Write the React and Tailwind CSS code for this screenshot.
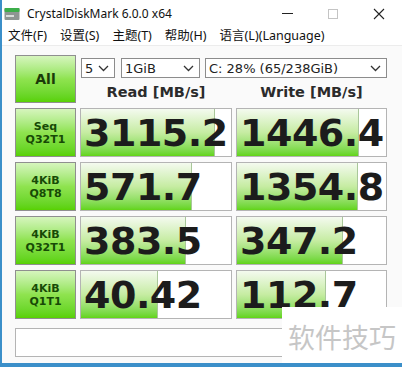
import { useState } from 'react';

const rows = [
  { top: 'Seq', bottom: 'Q32T1', read: '3115.2', readPct: 89, write: '1446.4', writePct: 82 },
  { top: '4KiB', bottom: 'Q8T8', read: '571.7', readPct: 74, write: '1354.8', writePct: 81 },
  { top: '4KiB', bottom: 'Q32T1', read: '383.5', readPct: 70, write: '347.2', writePct: 71 },
  { top: '4KiB', bottom: 'Q1T1', read: '40.42', readPct: 51, write: '112.7', writePct: 60 },
];

const menus = ['文件(F)', '设置(S)', '主题(T)', '帮助(H)', '语言(L)(Language)'];

function Chevron() {
  return (
    <svg width="11" height="7" viewBox="0 0 11 7" className="shrink-0">
      <polyline points="1,1 5.5,5.5 10,1" fill="none" stroke="#333" strokeWidth="1.3" />
    </svg>
  );
}

function Select({ value, className }) {
  return (
    <div className={`h-[20px] flex items-center justify-between bg-white border border-[#8c8c8c] pl-[3px] pr-[5px] text-[13px] text-[#222] ${className}`}>
      <span className="leading-none">{value}</span>
      <Chevron />
    </div>
  );
}

function GreenButton({ children, className }) {
  return (
    <div className={`w-[61px] flex flex-col items-center justify-center border border-[#8f8f8f] bg-linear-to-b from-[#d6f5bd] via-[#8fe34f] to-[#58d100] ${className}`}>
      {children}
    </div>
  );
}

function Meter({ value, pct, className }) {
  return (
    <div className={`relative h-full bg-white border border-[#b4b4b4] overflow-hidden flex items-center ${className}`}>
      <div
        className="absolute left-0 top-0 bottom-0 border-r border-[#a9c79a] bg-linear-to-b from-[#f4faef] via-[#c6eca2] to-[#62d414]"
        style={{ width: `${pct}%` }}
      />
      <span className="relative pl-[3px] text-[38px] leading-none font-bold text-[#1c1c1c] tracking-[-0.5px] whitespace-nowrap">
        {value}
      </span>
    </div>
  );
}

export default function App() {
  const [count] = useState('5');

  return (
    <div
      className="w-[402px] h-[367px] relative overflow-hidden flex flex-col bg-white border-l-[2px] border-b-[4px] border-[#3b8fc9]"
      style={{ fontFamily: '"DejaVu Sans", sans-serif' }}
    >
      {/* Title bar */}
      <div className="h-[27px] flex items-center bg-white shrink-0" style={{ fontFamily: '"Noto Sans", sans-serif' }}>
        <svg width="16" height="14" viewBox="0 0 16 14" className="ml-[2px]">
          <rect x="0.5" y="1" width="15" height="12" rx="1" fill="#8e9693" />
          <rect x="0.5" y="1" width="15" height="4" rx="1" fill="#3cae4a" />
          <rect x="2" y="8" width="8" height="2" fill="#d9dedc" />
        </svg>
        <span className="ml-[7px] text-[12px] text-[#111] leading-none">CrystalDiskMark 6.0.0 x64</span>
        <div className="ml-auto flex items-center h-full">
          <div className="w-[46px] h-full flex items-center justify-center">
            <div className="w-[11px] h-px bg-[#222]" />
          </div>
          <div className="w-[46px] h-full flex items-center justify-center">
            <div className="w-[10px] h-[10px] border border-[#c4c4c4]" />
          </div>
          <div className="w-[46px] h-full flex items-center justify-center">
            <svg width="12" height="12" viewBox="0 0 12 12">
              <path d="M1 1 L11 11 M11 1 L1 11" stroke="#222" strokeWidth="1.1" />
            </svg>
          </div>
        </div>
      </div>

      {/* Menu bar */}
      <div
        className="h-[19px] flex items-center gap-[13px] pl-[6px] bg-white text-[12.5px] text-[#111] shrink-0 border-b border-[#ececec]"
        style={{ fontFamily: '"Noto Sans", "Noto Sans CJK SC", sans-serif' }}
      >
        {menus.map((m) => (
          <span key={m} className="leading-none">{m}</span>
        ))}
      </div>

      {/* Content */}
      <div className="flex-1 bg-[#fafafa] pl-[13px] pt-[9px] flex flex-col">
        <div className="flex gap-[4px] h-[48px]">
          <GreenButton className="h-[48px]">
            <span className="text-[14px] font-bold text-[#1b3a0a] leading-none">All</span>
          </GreenButton>
          <div className="flex flex-col">
            <div className="flex mt-[3px] ml-[1px]">
              <Select value={count} className="w-[34px]" />
              <Select value="1GiB" className="w-[79px] ml-[6px]" />
              <Select value="C: 28% (65/238GiB)" className="w-[182px] ml-[5px]" />
            </div>
            <div className="flex mt-[7px] text-[14.5px] font-bold text-[#2b2b2b] leading-none">
              <div className="w-[152px] text-center">Read [MB/s]</div>
              <div className="w-[151px] ml-[4px] text-center">Write [MB/s]</div>
            </div>
          </div>
        </div>

        <div className="flex flex-col gap-[5px] mt-[5px]">
          {rows.map((r, i) => (
            <div key={i} className="flex gap-[4px] h-[49px]">
              <GreenButton className="h-full">
                <span className="text-[11px] font-bold text-[#174a06] leading-[13px]">{r.top}</span>
                <span className="text-[11px] font-bold text-[#174a06] leading-[13px]">{r.bottom}</span>
              </GreenButton>
              <Meter value={r.read} pct={r.readPct} className="w-[152px]" />
              <Meter value={r.write} pct={r.writePct} className="w-[151px]" />
            </div>
          ))}
        </div>

        <div className="mt-[9px] w-[372px] h-[29px] bg-white border border-[#b4b4b4]" />
      </div>

      {/* Watermark */}
      <div
        className="absolute right-0 top-[307px] w-[120px] h-[60px] bg-white flex items-center justify-center text-[27px] text-[#c6c6c6]"
        style={{ fontFamily: '"Noto Sans CJK SC", sans-serif' }}
      >
        软件技巧
      </div>
    </div>
  );
}
